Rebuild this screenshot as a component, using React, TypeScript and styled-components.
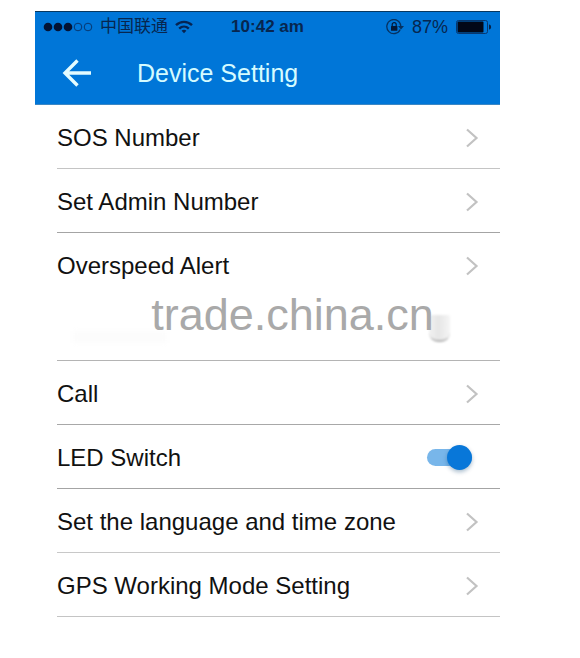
import React, { useState } from "react";
import styled, { createGlobalStyle, css } from "styled-components";

const GlobalStyle = createGlobalStyle`
  *, *::before, *::after { box-sizing: border-box; }
  body {
    margin: 0;
    background: #ffffff;
    font-family: "Liberation Sans", "Noto Sans CJK SC", Arial, sans-serif;
    color: #111111;
  }
`;

const Screen = styled.main`
  position: relative;
  margin: 11px 80px 0 35px;
`;

const Header = styled.header`
  background: #0076d8;
  border-top: 1px solid #073860;
  border-bottom: 1px solid #3c87c4;
`;

const StatusBar = styled.div`
  display: grid;
  grid-template-columns: 1fr auto 1fr;
  align-items: center;
  height: 30px;
  padding: 0 8px 0 8px;
  color: #07264f;
  font-size: 17px;
  line-height: 20px;
  white-space: nowrap;
`;

const StatusGroup = styled.div<{ $end?: boolean }>`
  display: flex;
  align-items: center;
  justify-content: ${(p) => (p.$end ? "flex-end" : "flex-start")};
  gap: ${(p) => (p.$end ? "8px" : "7px")};
`;

const Percent = styled.span`
  font-size: 18px;
`;

const Time = styled.time`
  font-weight: 700;
`;

const TitleBar = styled.div`
  display: flex;
  align-items: center;
  height: 62px;
  gap: 44px;
  padding-left: 26px;
`;

const BackButton = styled.button`
  display: flex;
  padding: 0;
  border: 0;
  background: none;
  cursor: pointer;
`;

const Title = styled.h1`
  margin: 0;
  color: #d5fbff;
  font-size: 25px;
  font-weight: 400;
  line-height: 32px;
`;

const List = styled.ul`
  margin: 0;
  padding: 0 0 0 22px;
  list-style: none;
`;

const Item = styled.li<{ $line: string }>`
  height: 64px;
  border-bottom: 1px solid ${(p) => p.$line};
`;

const rowStyle = css`
  display: flex;
  align-items: center;
  justify-content: space-between;
  height: 100%;
  padding: 2px 21px 0 0;
  color: inherit;
  font-size: 24px;
  line-height: 32px;
  text-decoration: none;
`;

const RowLink = styled.a`
  ${rowStyle}
`;

const RowLabel = styled.label`
  ${rowStyle}
`;

const Toggle = styled.input`
  appearance: none;
  display: flex;
  align-items: center;
  width: 45px;
  height: 17px;
  margin: 0 7px 0 0;
  border-radius: 9px;
  background: #78b6ea;
  cursor: pointer;

  &::before {
    content: "";
    flex: none;
    width: 25px;
    height: 25px;
    border-radius: 50%;
    background: #0877d9;
    box-shadow: 0 2px 4px rgba(0, 60, 110, 0.35);
  }

  &:checked::before {
    margin-left: auto;
  }
`;

const FadedRow = styled.div`
  display: flex;
  align-items: center;
  justify-content: space-between;
  height: 100%;
  padding: 0 50px 0 16px;
`;

const FadedText = styled.span`
  width: 94px;
  height: 12px;
  margin-top: 16px;
  background: #fcfcfc;
  filter: blur(2px);
`;

const FadedKnob = styled.span`
  width: 21px;
  height: 27px;
  border-bottom: 2px solid #b4b4b4;
  border-radius: 2px 2px 9px 9px;
  background: linear-gradient(90deg, #f1f1f1, #e6e6e6 45%, #f5f5f5);
  filter: blur(1px);
`;

const Watermark = styled.div`
  position: absolute;
  inset: 279px 0 auto 50px;
  display: flex;
  justify-content: center;
  color: #a9a9a9;
  font-size: 45px;
  line-height: 50px;
  pointer-events: none;
`;

const SignalIcon = () => (
  <svg width="50" height="12" viewBox="0 0 50 12" aria-hidden="true">
    {[5, 15, 25].map((x) => (
      <circle key={x} cx={x} cy="6" r="4.3" fill="#031334" />
    ))}
    {[35, 45].map((x) => (
      <circle key={x} cx={x} cy="6" r="3.8" fill="none" stroke="#07376f" />
    ))}
  </svg>
);

const WifiIcon = () => (
  <svg width="18" height="14" viewBox="0 0 18 14" fill="none" stroke="#062451" strokeWidth="2.4" aria-hidden="true">
    <path d="M1 5.2C5.6.7 12.4.7 17 5.2" />
    <path d="M4.2 8.6c2.8-2.7 6.8-2.7 9.6 0" />
    <path d="M9 13.2 6.6 10.8c1.3-1.3 3.5-1.3 4.8 0z" fill="#062451" stroke="none" />
  </svg>
);

const RotationLockIcon = () => (
  <svg width="18" height="16" viewBox="0 0 18 16" fill="none" aria-hidden="true">
    <path d="M14.2 10.5A7 7 0 1 1 14.8 7" stroke="#06315f" strokeWidth="1.3" />
    <path d="M12 7h6l-3 3.6z" fill="#06315f" />
    <rect x="5" y="7" width="6.4" height="4.8" rx=".6" fill="#031838" />
    <path d="M6.2 7.4V5.6a2 2 0 0 1 4 0v1.8" stroke="#031838" strokeWidth="1.2" />
  </svg>
);

const BatteryIcon = () => (
  <svg width="36" height="14" viewBox="0 0 36 14" aria-hidden="true">
    <rect x=".5" y=".5" width="31" height="13" rx="2" fill="none" stroke="#07376f" />
    <rect x="1.5" y="1.5" width="26" height="11" rx="1" fill="#020818" />
    <path d="M33 4.5c2.8 0 2.8 5 0 5z" fill="#052247" />
  </svg>
);

const BackIcon = () => (
  <svg width="32" height="30" viewBox="0 0 32 30" fill="none" stroke="#e4fcff" strokeWidth="3.4" aria-hidden="true">
    <path d="M16.5 2.5 4 15l12.5 12.5M4 15h26" />
  </svg>
);

const Chevron = () => (
  <svg width="14" height="20" viewBox="0 0 14 20" fill="none" stroke="#c2c2c2" strokeWidth="2.2" aria-hidden="true">
    <path d="m2 1.5 9.5 8.5L2 18.5" />
  </svg>
);

type Entry = { kind: "link" | "toggle" | "faded"; text: string; line: string };

const entries: Entry[] = [
  { kind: "link", text: "SOS Number", line: "#c4c4c4" },
  { kind: "link", text: "Set Admin Number", line: "#a4a4a4" },
  { kind: "link", text: "Overspeed Alert", line: "transparent" },
  { kind: "faded", text: "", line: "#b4b4b4" },
  { kind: "link", text: "Call", line: "#a8a8a8" },
  { kind: "toggle", text: "LED Switch", line: "#a4a4a4" },
  { kind: "link", text: "Set the language and time zone", line: "#c8c8c8" },
  { kind: "link", text: "GPS Working Mode Setting", line: "#c4c4c4" },
];

export default function App() {
  const [led, setLed] = useState(true);

  return (
    <>
      <GlobalStyle />
      <Screen>
        <Header>
          <StatusBar>
            <StatusGroup>
              <SignalIcon />
              <span lang="zh-CN">中国联通</span>
              <WifiIcon />
            </StatusGroup>
            <Time>10:42 am</Time>
            <StatusGroup $end>
              <RotationLockIcon />
              <Percent>87%</Percent>
              <BatteryIcon />
            </StatusGroup>
          </StatusBar>
          <TitleBar>
            <BackButton type="button" aria-label="Back">
              <BackIcon />
            </BackButton>
            <Title>Device Setting</Title>
          </TitleBar>
        </Header>
        <List>
          {entries.map((entry, index) => (
            <Item key={index} $line={entry.line}>
              {entry.kind === "link" && (
                <RowLink href="#">
                  <span>{entry.text}</span>
                  <Chevron />
                </RowLink>
              )}
              {entry.kind === "toggle" && (
                <RowLabel htmlFor="led-switch">
                  <span>{entry.text}</span>
                  <Toggle
                    id="led-switch"
                    type="checkbox"
                    role="switch"
                    checked={led}
                    onChange={(event) => setLed(event.target.checked)}
                  />
                </RowLabel>
              )}
              {entry.kind === "faded" && (
                <FadedRow aria-hidden="true">
                  <FadedText />
                  <FadedKnob />
                </FadedRow>
              )}
            </Item>
          ))}
        </List>
        <Watermark>trade.china.cn</Watermark>
      </Screen>
    </>
  );
}
